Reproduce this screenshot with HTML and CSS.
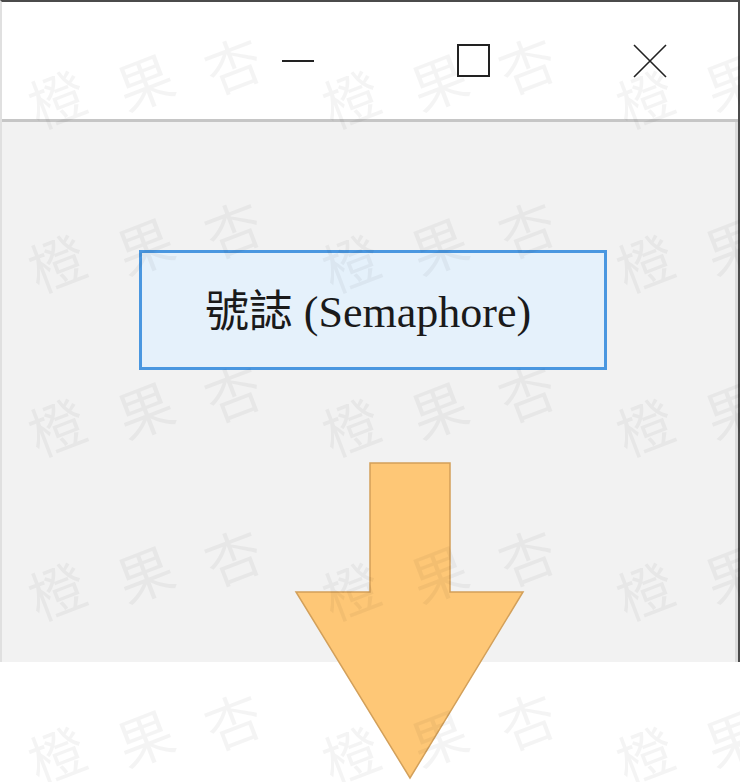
FILE: index.html
```html
<!DOCTYPE html>
<html lang="zh-Hant">
<head>
  <meta charset="UTF-8">
  <meta name="viewport" content="width=device-width, initial-scale=1.0">
  <title>號誌 (Semaphore)</title>
  <link rel="stylesheet" href="styles.css">
</head>
<body>
  <div class="screen">
    <div class="window">
      <div class="titlebar">
        <div class="caption-btn">
          <svg width="34" height="34" viewBox="0 0 34 34"><line x1="1" y1="17" x2="33" y2="17" stroke="#222" stroke-width="2"/></svg>
        </div>
        <div class="caption-btn">
          <svg width="34" height="34" viewBox="0 0 34 34"><rect x="1" y="1" width="31" height="31" fill="none" stroke="#222" stroke-width="2"/></svg>
        </div>
        <div class="caption-btn">
          <svg width="34" height="34" viewBox="0 0 34 34"><path d="M1 1 L33 33 M33 1 L1 33" stroke="#222" stroke-width="1.6" fill="none"/></svg>
        </div>
      </div>
      <div class="client">
        <button class="action">號誌 (Semaphore)</button>
      </div>
    </div>

    <svg class="arrow" width="240" height="324" viewBox="0 0 240 324">
      <polygon points="80,5 160,5 160,134 233,134 120,320 6,134 80,134" fill="#fec776" stroke="#d3a05a" stroke-width="1.5"/>
    </svg>

    <div class="watermark">
      <div class="mark"><span>橙</span><span>果</span><span>杏</span></div>
      <div class="mark"><span>橙</span><span>果</span><span>杏</span></div>
      <div class="mark"><span>橙</span><span>果</span><span>杏</span></div>
      <div class="mark"><span>橙</span><span>果</span><span>杏</span></div>
      <div class="mark"><span>橙</span><span>果</span><span>杏</span></div>
      <div class="mark"><span>橙</span><span>果</span><span>杏</span></div>
      <div class="mark"><span>橙</span><span>果</span><span>杏</span></div>
      <div class="mark"><span>橙</span><span>果</span><span>杏</span></div>
      <div class="mark"><span>橙</span><span>果</span><span>杏</span></div>
      <div class="mark"><span>橙</span><span>果</span><span>杏</span></div>
      <div class="mark"><span>橙</span><span>果</span><span>杏</span></div>
      <div class="mark"><span>橙</span><span>果</span><span>杏</span></div>
      <div class="mark"><span>橙</span><span>果</span><span>杏</span></div>
      <div class="mark"><span>橙</span><span>果</span><span>杏</span></div>
      <div class="mark"><span>橙</span><span>果</span><span>杏</span></div>
    </div>
  </div>
</body>
</html>
```

FILE: styles.css
```css
html, body {
  margin: 0;
  padding: 0;
  background: #fff;
}
body {
  font-family: "Liberation Serif", "Noto Sans CJK TC", serif;
  overflow: hidden;
}
.screen {
  position: relative;
  width: 740px;
  height: 782px;
  overflow: hidden;
}
.window {
  width: 740px;
  height: 662px;
  box-sizing: border-box;
  border-top: 2px solid #4b4b4b;
  border-right: 2px solid #4b4b4b;
  border-left: 2px solid #e0e0e0;
  display: flex;
  flex-direction: column;
}
.titlebar {
  height: 117px;
  background: #fff;
  border-bottom: 3px solid #c6c6c6;
  display: flex;
  justify-content: flex-end;
}
.caption-btn {
  width: 176px;
  display: flex;
  align-items: center;
  justify-content: center;
}
.caption-btn svg {
  display: block;
}
.client {
  flex: 1;
  background: #f2f2f2;
  border-right: 3px solid #dcdcdc;
  padding-top: 128px;
  padding-left: 137px;
}
.action {
  display: flex;
  align-items: center;
  justify-content: center;
  width: 468px;
  height: 120px;
  box-sizing: border-box;
  border: 3px solid #4a97e0;
  background: #e5f1fb;
  color: #1a1a1a;
  font-family: "Liberation Serif", "Noto Sans CJK TC", serif;
  font-size: 44px;
  padding: 0 10px 4px 0;
}
.arrow {
  position: absolute;
  left: 290px;
  top: 458px;
}
.watermark {
  position: absolute;
  left: -3px;
  top: -3px;
  display: grid;
  grid-template-columns: repeat(3, 294px);
  grid-auto-rows: 164px;
  pointer-events: none;
}
.mark {
  display: flex;
  align-items: center;
  justify-content: center;
  transform: rotate(-11deg);
  font-family: "Noto Sans CJK TC", sans-serif;
  font-size: 56px;
  color: rgba(0, 0, 0, 0.042);
}
.mark span {
  display: inline-block;
  width: 90px;
  text-align: center;
  transform: rotate(-10deg);
}
```
